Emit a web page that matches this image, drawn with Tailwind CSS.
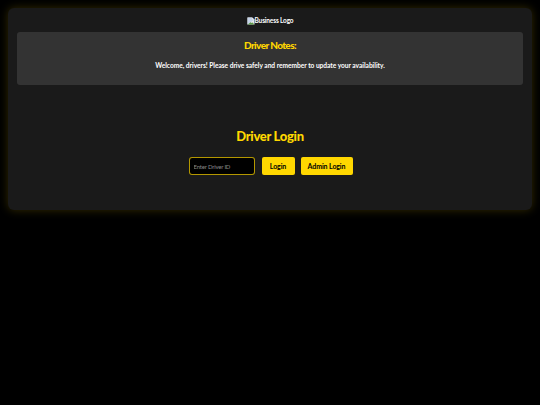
<!DOCTYPE html>
<html lang="en">
<head>
<meta charset="utf-8">
<title>Driver Login</title>
<script src="https://cdn.jsdelivr.net/npm/@tailwindcss/browser@4"></script>
</head>
<body class="bg-black min-h-[405px] p-2 font-['Lato',sans-serif] text-white">
<main class="bg-[#1a1a1a] rounded-[6px] shadow-[0_0_10px_rgba(255,215,0,0.2)] h-[202px] px-[9px] pt-[5px] text-center">
  <div class="flex h-[16px] items-center justify-center text-[6.5px] font-bold tracking-[-0.15px]">
    <svg class="size-2" viewBox="0 0 16 16"><path d="M1 1h10l4 4v10H1z" fill="#e8e8e8"/><path d="M1 15l5-6 3 3 2-1 4 4z" fill="#5c9a4a"/><path d="M1 1h9v4h5L1 15z" fill="#c5d3e8"/></svg>
    <span>Business Logo</span>
  </div>
  <section class="bg-[#333333] rounded-[3px] h-[53px] mt-[3px] pt-[7px]">
    <h2 class="text-[#ffd700] text-[10px] font-black tracking-[-0.6px] leading-[12px]">Driver Notes:</h2>
    <p class="text-[6.6px] font-bold leading-[9px] mt-[10px] tracking-[-0.02px]">Welcome, drivers! Please drive safely and remember to update your availability.</p>
  </section>
  <h1 class="text-[#ffd700] text-[13px] font-black tracking-[-0.3px] leading-[17px] mt-[43px]">Driver Login</h1>
  <div class="flex items-center justify-center mt-[12px] pl-px">
    <input class="bg-black border border-[#ffd700]/70 rounded-[3px] w-[66px] h-[18px] px-1 text-[6px] tracking-[-0.2px] text-white placeholder:text-[#8a8a8a] font-['Lato',sans-serif]" placeholder="Enter Driver ID">
    <button class="bg-[#ffd700] text-black rounded-[2px] w-[33px] h-[18px] ml-[7px] text-[7px] tracking-[-0.1px] font-bold">Login</button>
    <button class="bg-[#ffd700] text-black rounded-[2px] w-[52px] h-[18px] ml-[6px] text-[7px] tracking-[-0.1px] font-bold">Admin Login</button>
  </div>
</main>
</body>
</html>
